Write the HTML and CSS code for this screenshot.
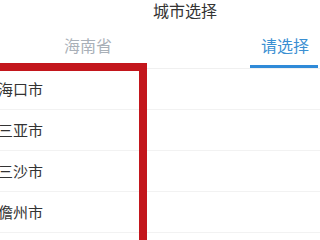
FILE: index.html
```html
<!DOCTYPE html>
<html lang="zh">
<head>
<meta charset="utf-8">
<link rel="stylesheet" href="styles.css">
</head>
<body>
<div class="page">
  <div class="title">城市选择</div>
  <div class="tabs">
    <div class="tab">海南省</div>
    <div class="tab active">请选择</div>
  </div>
  <ul class="list">
    <li class="row">海口市</li>
    <li class="row">三亚市</li>
    <li class="row">三沙市</li>
    <li class="row">儋州市</li>
  </ul>
  <div class="highlight"></div>
</div>
</body>
</html>
```
FILE: styles.css
```css
* { box-sizing: border-box; }
html, body { margin: 0; padding: 0; background: #fff; }
body {
  width: 320px;
  height: 240px;
  overflow: hidden;
  font-family: "Noto Sans CJK SC", "Noto Sans", sans-serif;
}
.page { position: relative; width: 320px; height: 240px; }
.title {
  height: 20px;
  line-height: 20px;
  font-size: 16px;
  color: #333;
  text-align: center;
  padding-left: 50px;
}
.tabs {
  display: flex;
  justify-content: space-between;
  padding: 0 2px 0 54px;
  border-bottom: 1px solid #f0f0f0;
}
.tab {
  width: 68px;
  padding-top: 15px;
  padding-bottom: 10px;
  line-height: 20px;
  font-size: 16px;
  text-align: center;
  color: #a9b0b8;
  border-bottom: 3px solid transparent;
}
.tab.active {
  color: #3a8fd2;
  border-bottom-color: #2f8ad8;
  padding-left: 2px;
}
.list { list-style: none; margin: 0; padding: 0; }
.row {
  height: 41px;
  line-height: 40px;
  font-size: 15px;
  color: #333;
  border-bottom: 1px solid #f2f2f2;
  margin-left: -2px;
}
.highlight {
  position: absolute;
  left: -20px;
  top: 63px;
  width: 167px;
  height: 200px;
  border: 8px solid #c3161c;
}
```
